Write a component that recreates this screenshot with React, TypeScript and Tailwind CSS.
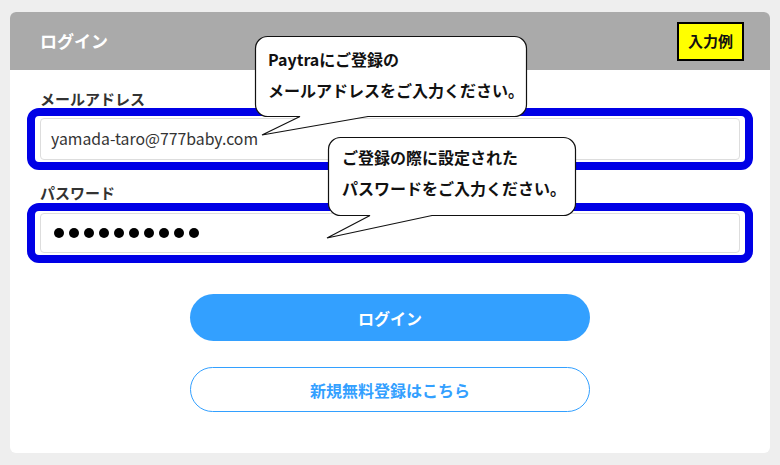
const font = { fontFamily: '"Noto Sans CJK JP", "Noto Sans", sans-serif' };

function Callouts() {
  return (
    <>
      <svg className="pointer-events-none absolute left-0 top-0" width="780" height="465" viewBox="0 0 780 465">
        <path
          d="M 267.5 36.5 H 514.5 A 12 12 0 0 1 526.5 48.5 V 104.5 A 12 12 0 0 1 514.5 116.5 H 368 L 262 135 L 300 116.5 H 267.5 A 12 12 0 0 1 255.5 104.5 V 48.5 A 12 12 0 0 1 267.5 36.5 Z"
          fill="#ffffff"
          stroke="#111111"
          strokeWidth="1.2"
        />
        <path
          d="M 340.5 137.5 H 563.5 A 12 12 0 0 1 575.5 149.5 V 203.5 A 12 12 0 0 1 563.5 215.5 H 432 L 327 238 L 370 215.5 H 340.5 A 12 12 0 0 1 328.5 203.5 V 149.5 A 12 12 0 0 1 340.5 137.5 Z"
          fill="#ffffff"
          stroke="#111111"
          strokeWidth="1.2"
        />
      </svg>
      <div className="absolute left-[268px] top-[44px] text-[16px] font-bold leading-[31px] text-[#111]">
        <div>Paytraにご登録の</div>
        <div>メールアドレスをご入力ください。</div>
      </div>
      <div className="absolute left-[342px] top-[142px] text-[16px] font-bold leading-[31px] text-[#111]">
        <div>ご登録の際に設定された</div>
        <div>パスワードをご入力ください。</div>
      </div>
    </>
  );
}

export default function App() {
  return (
    <div className="relative h-[465px] w-[780px] overflow-hidden bg-[#eeeeee] px-[10px] pt-3" style={font}>
      <div className="h-[441px] rounded-md bg-white">
        <div className="flex h-[58px] items-center justify-between rounded-t-md bg-[#aaaaaa] pl-[30px] pr-[26px]">
          <span className="text-[17px] font-bold text-white">ログイン</span>
          <span className="flex h-[39px] w-[67px] items-center justify-center border-2 border-black bg-[#ffff00] text-[15px] font-bold text-[#111]">
            入力例
          </span>
        </div>

        <div className="px-[17px] pt-[20px]">
          <div className="pl-[13px] text-[15px] font-bold leading-[18px] text-[#333]">メールアドレス</div>
          <div className="h-[62px] rounded-[12px] border-[8px] border-[#0000e6] px-[5px] py-[2px]">
            <div className="flex h-[42px] items-center rounded-[4px] border border-[#dddddd] pl-[10px] text-[15.8px] text-[#333]">
              yamada-taro@777baby.com
            </div>
          </div>

          <div className="mt-[14px] pl-[13px] text-[15px] font-bold leading-[18px] text-[#333]">パスワード</div>
          <div className="mt-[1px] h-[60px] rounded-[12px] border-[8px] border-[#0000e6] px-[5px] py-[2px]">
            <div className="flex h-[40px] items-center gap-[5px] rounded-[4px] border border-[#dddddd] pl-[13px]">
              {Array.from({ length: 10 }).map((_, i) => (
                <span key={i} className="h-[10px] w-[10px] rounded-full bg-black" />
              ))}
            </div>
          </div>

          <div className="mt-[31px] flex flex-col items-center gap-[26px]">
            <button className="h-[47px] w-[400px] rounded-full bg-[#33a0ff] text-[16px] font-bold text-white">
              ログイン
            </button>
            <button className="h-[45px] w-[400px] rounded-full border border-[#33a0ff] bg-white text-[16px] font-bold text-[#33a0ff]">
              新規無料登録はこちら
            </button>
          </div>
        </div>
      </div>
      <Callouts />
    </div>
  );
}
